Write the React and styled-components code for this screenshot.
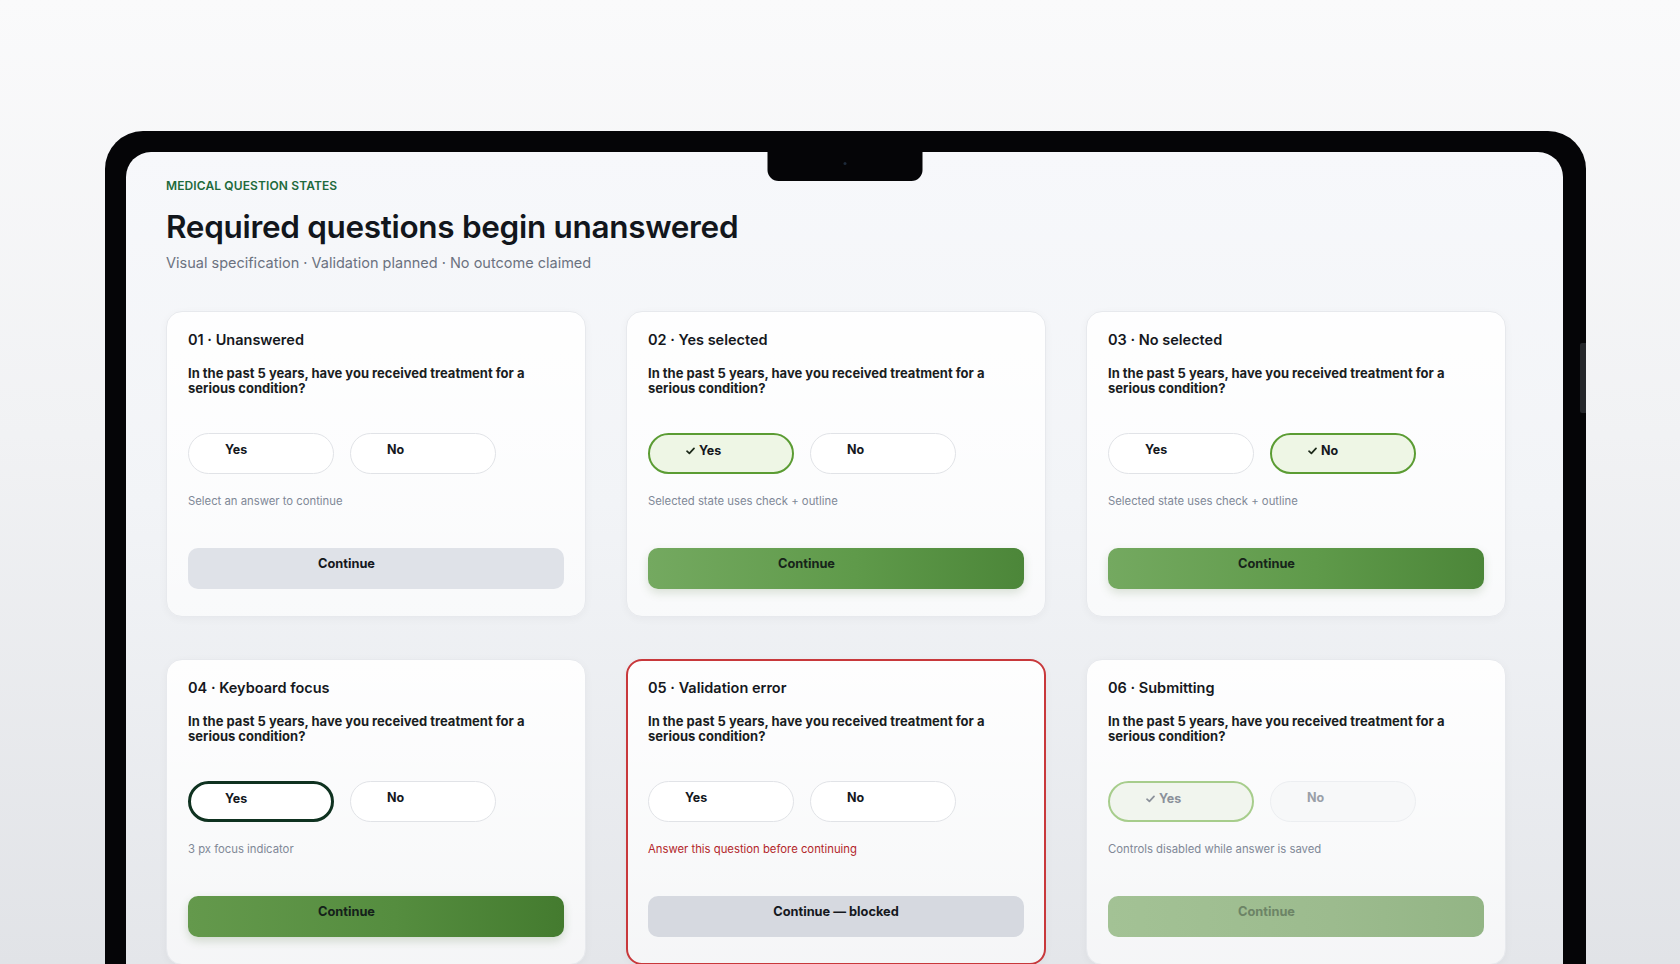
import React from 'react'
import styled, {createGlobalStyle, css} from 'styled-components'

const cards = [
    {
        id: '01',
        name: 'Unanswered',
        choices: [{label: 'Yes'}, {label: 'No'}],
        hint: 'Select an answer to continue',
        button: {label: 'Continue', variant: 'idle'},
    },
    {
        id: '02',
        name: 'Yes selected',
        choices: [{label: 'Yes', state: 'selected'}, {label: 'No'}],
        hint: 'Selected state uses check + outline',
        button: {label: 'Continue', variant: 'go'},
    },
    {
        id: '03',
        name: 'No selected',
        choices: [{label: 'Yes'}, {label: 'No', state: 'selected'}],
        hint: 'Selected state uses check + outline',
        button: {label: 'Continue', variant: 'go'},
    },
    {
        id: '04',
        name: 'Keyboard focus',
        choices: [{label: 'Yes', state: 'focus'}, {label: 'No'}],
        hint: '3 px focus indicator',
        button: {label: 'Continue', variant: 'goDeep'},
    },
    {
        id: '05',
        name: 'Validation error',
        error: true,
        choices: [{label: 'Yes'}, {label: 'No'}],
        hint: 'Answer this question before continuing',
        button: {label: 'Continue \u2014 blocked', variant: 'blocked'},
    },
    {
        id: '06',
        name: 'Submitting',
        choices: [{label: 'Yes', state: 'savedSelected'}, {label: 'No', state: 'disabled'}],
        hint: 'Controls disabled while answer is saved',
        button: {label: 'Continue', variant: 'saving'},
    },
]

const Check = ({color}) => (
    <svg width="9" height="8" viewBox="0 0 9 8" fill="none">
        <path d="M1 4.2 L3.4 6.4 L8 1.4" stroke={color} strokeWidth="1.7" strokeLinecap="round" strokeLinejoin="round" />
    </svg>
)

const App = () => {
    return (
        <>
            <GlobalStyle />
            <Stage>
                <Laptop>
                    <SideKey />
                    <Screen>
                        <Notch><Lens /></Notch>
                        <Eyebrow>Medical question states</Eyebrow>
                        <Heading>Required questions begin unanswered</Heading>
                        <Subtitle>Visual specification · Validation planned · No outcome claimed</Subtitle>

                        <Grid>
                            {cards.map((card) => (
                                <Card key={card.id} $error={card.error}>
                                    <CardTitle>{card.id} · {card.name}</CardTitle>
                                    <Question>In the past 5 years, have you received treatment for a serious condition?</Question>
                                    <Choices>
                                        {card.choices.map((choice) => (
                                            <Choice key={choice.label} $state={choice.state || 'idle'}>
                                                {(choice.state === 'selected' || choice.state === 'savedSelected') && (
                                                    <Check color={choice.state === 'selected' ? '#1d2a1a' : '#8b919a'} />
                                                )}
                                                {choice.label}
                                            </Choice>
                                        ))}
                                    </Choices>
                                    <Hint $error={card.error}>{card.hint}</Hint>
                                    <ContinueButton $variant={card.button.variant}>{card.button.label}</ContinueButton>
                                </Card>
                            ))}
                        </Grid>
                    </Screen>
                </Laptop>
            </Stage>
        </>
    )
}

const GlobalStyle = createGlobalStyle`
    html, body {
        margin: 0;
        padding: 0;
        height: 100%;
        overflow: hidden;
    }
    body {
        font-family: Inter, "Noto Sans", "DejaVu Sans", sans-serif;
        background: linear-gradient(180deg, #fafafb 0%, #f1f2f4 45%, #e1e3e7 100%);
        color: #15181d;
        -webkit-font-smoothing: antialiased;
    }
    * {
        box-sizing: border-box;
    }
`

const Stage = styled.div`
    height: 964px;
    overflow: hidden;
    padding: 131px 0 0 105px;
`

const Laptop = styled.div`
    position: relative;
    width: 1481px;
    height: 900px;
    background: #050507;
    border-radius: 38px 38px 0 0;
    padding: 21px 23px 0 21px;
`

const SideKey = styled.div`
    position: absolute;
    right: 0;
    top: 212px;
    width: 6px;
    height: 70px;
    background: #24262a;
    border-radius: 2px 0 0 2px;
`

const Screen = styled.div`
    position: relative;
    height: 100%;
    border-radius: 25px 25px 0 0;
    background: linear-gradient(180deg, #f7f8fb 0%, #f2f4f7 40%, #e2e4e8 100%);
    padding: 26px 0 0 40px;
    overflow: hidden;
`

const Notch = styled.div`
    position: absolute;
    top: 0;
    left: 50%;
    transform: translateX(-50%);
    width: 155px;
    height: 29px;
    background: #050507;
    border-radius: 0 0 11px 11px;
    display: flex;
    justify-content: center;
    padding-top: 10px;
`

const Lens = styled.span`
    width: 3px;
    height: 3px;
    border-radius: 50%;
    background: #1d2a3a;
`

const Eyebrow = styled.div`
    font-size: 12px;
    line-height: 16px;
    font-weight: 600;
    color: #1e6a3c;
    text-transform: uppercase;
    letter-spacing: 0.01em;
`

const Heading = styled.h1`
    margin: 14px 0 0;
    font-size: 31.5px;
    line-height: 38px;
    font-weight: 600;
    letter-spacing: -0.01em;
    color: #12161c;
`

const Subtitle = styled.p`
    margin: 7px 0 0;
    font-size: 14.5px;
    line-height: 20px;
    color: #6b7280;
`

const Grid = styled.div`
    margin-top: 38px;
    display: grid;
    grid-template-columns: repeat(3, 420px);
    column-gap: 40px;
    row-gap: 42px;
`

const Card = styled.div`
    height: 306px;
    border-radius: 16px;
    border: 1px solid #e7e9ed;
    background: linear-gradient(180deg, rgba(255, 255, 255, 0.94) 0%, rgba(255, 255, 255, 0.62) 100%);
    box-shadow: 0 2px 8px rgba(20, 30, 45, 0.04);
    padding: 18px 21px 0;
    ${(p) => p.$error && css`
        border: 2px solid #c8383b;
        padding: 17px 20px 0;
    `}
`

const CardTitle = styled.div`
    font-size: 14.5px;
    line-height: 20px;
    font-weight: 600;
    color: #15181d;
`

const Question = styled.p`
    margin: 16px 0 0;
    font-size: 13px;
    line-height: 15px;
    font-weight: 700;
    color: #1a1d22;
    max-width: 350px;
`

const Choices = styled.div`
    margin-top: 37px;
    display: flex;
    gap: 16px;
`

const choiceStates = {
    idle: css`
        border: 1.5px solid #e1e3e7;
        background: #ffffff;
        color: #15181d;
    `,
    selected: css`
        border: 2px solid #5b9c33;
        background: #eef6e5;
        color: #15181d;
    `,
    focus: css`
        border: 3px solid #0f3220;
        background: #ffffff;
        color: #15181d;
        padding-left: 34px;
        padding-top: 6.5px;
    `,
    savedSelected: css`
        border: 2px solid #a7cd8c;
        background: #f1f5ee;
        color: #8b919a;
    `,
    disabled: css`
        border: 1.5px solid #eceef1;
        background: #f7f8f9;
        color: #9a9fa8;
    `,
}

const Choice = styled.button`
    width: 146px;
    height: 41px;
    border-radius: 999px;
    padding: 7.5px 0 0 36px;
    display: flex;
    align-items: flex-start;
    gap: 4px;
    font-family: inherit;
    font-size: 12.5px;
    line-height: 16px;
    font-weight: 700;
    cursor: pointer;
    ${(p) => choiceStates[p.$state]}
    ${(p) => (p.$state === 'selected' || p.$state === 'savedSelected') && css`
        padding-left: 36px;
        svg {
            margin-top: 4px;
        }
    `}
`

const Hint = styled.div`
    margin-top: 20px;
    font-size: 11.3px;
    line-height: 14px;
    color: ${(p) => (p.$error ? '#b3262a' : '#808897')};
`

const buttonVariants = {
    idle: css`
        background: #dfe2e8;
        color: #15181d;
    `,
    go: css`
        background: linear-gradient(90deg, #74a960 0%, #5f9a4a 55%, #4c8639 100%);
        color: #17241a;
        box-shadow: 0 4px 10px rgba(70, 110, 50, 0.18);
    `,
    goDeep: css`
        background: linear-gradient(90deg, #64994c 0%, #558d3f 55%, #447b2f 100%);
        color: #14211a;
        box-shadow: 0 4px 10px rgba(60, 100, 40, 0.2);
    `,
    blocked: css`
        background: #d6d9e0;
        color: #15181d;
        padding-left: 0;
        justify-content: center;
    `,
    saving: css`
        background: linear-gradient(90deg, #a3c295 0%, #9cbb8e 60%, #93b585 100%);
        color: #6c8466;
    `,
}

const ContinueButton = styled.button`
    margin-top: 40px;
    width: 100%;
    height: 41px;
    border: none;
    border-radius: 10px;
    padding: 8px 0 0 130px;
    display: flex;
    align-items: flex-start;
    font-family: inherit;
    font-size: 12.8px;
    line-height: 16px;
    font-weight: 700;
    cursor: pointer;
    ${(p) => buttonVariants[p.$variant]}
`

export default App
